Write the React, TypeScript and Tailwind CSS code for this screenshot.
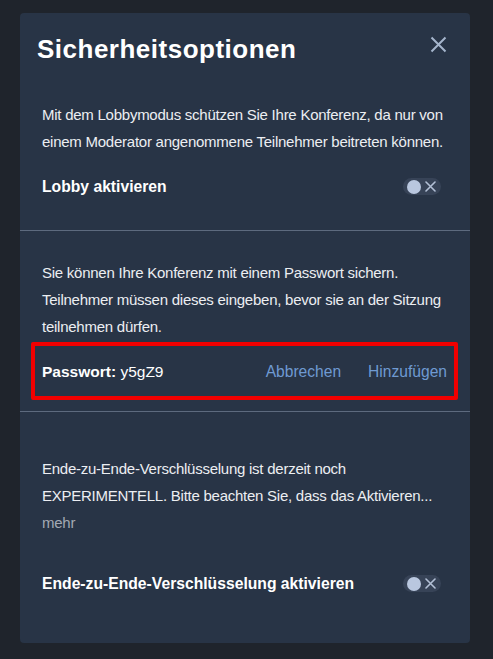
import React from "react";

function Toggle() {
  return (
    <div className="mr-[7px] flex h-[17px] w-[38px] shrink-0 items-center rounded-full bg-[#374357] pl-[4px]">
      <div className="h-[14px] w-[14px] rounded-full bg-[#b9c7df]" />
      <svg className="ml-[4px]" width="11" height="11" viewBox="0 0 11 11">
        <path d="M1 1 L10 10 M10 1 L1 10" stroke="#b3c0d6" strokeWidth="1.6" strokeLinecap="round" />
      </svg>
    </div>
  );
}

export default function App() {
  const font = { fontFamily: '"Liberation Sans", Arial, sans-serif' };
  return (
    <div className="min-h-[659px] w-full bg-[#1f242c] pt-[13px] pb-[16px] pl-[20px] pr-[23px]" style={font}>
      <div className="flex h-[630px] flex-col rounded-[4px] bg-[#283446] text-white">
        {/* Header */}
        <div className="flex items-start justify-between pl-[17px] pr-[23px] pt-[20px]">
          <h1 className="text-[26px] font-bold leading-[32px] tracking-[0.5px] text-white">Sicherheitsoptionen</h1>
          <svg className="mt-[3px]" width="17" height="17" viewBox="0 0 17 17">
            <path d="M1.5 1.5 L15.5 15.5 M15.5 1.5 L1.5 15.5" stroke="#a5b5cc" strokeWidth="2" />
          </svg>
        </div>

        {/* Section 1 */}
        <div className="px-[22px] pt-[36px] pb-[30px]">
          <p className="text-[15px] leading-[27px] tracking-[-0.25px] text-[#eceef2]">
            Mit dem Lobbymodus schützen Sie Ihre Konferenz, da nur von einem Moderator angenommene Teilnehmer beitreten können.
          </p>
          <div className="mt-[18px] flex items-center justify-between">
            <span className="text-[15.7px] font-bold leading-[27px]">Lobby aktivieren</span>
            <Toggle />
          </div>
        </div>
        <div className="h-px bg-[#5d6a7e]" />

        {/* Section 2 */}
        <div className="px-[22px] pt-[28px] pb-[11px]">
          <p className="text-[15px] leading-[27px] tracking-[-0.25px] text-[#eceef2]">
            Sie können Ihre Konferenz mit einem Passwort sichern. Teilnehmer müssen dieses eingeben, bevor sie an der Sitzung teilnehmen dürfen.
          </p>
          <div className="mt-[2px] -ml-[11px] -mr-[10px] flex h-[58px] items-center rounded-[2px] border-4 border-[#f20000] pl-[7px] pr-[7px]">
            <span className="text-[15.5px] leading-[27px]">
              <span className="font-bold">Passwort:</span> y5gZ9
            </span>
            <div className="ml-auto flex gap-[27px] text-[15.6px] leading-[27px] text-[#6f9ad2]">
              <span>Abbrechen</span>
              <span>Hinzufügen</span>
            </div>
          </div>
        </div>
        <div className="h-px bg-[#5d6a7e]" />

        {/* Section 3 */}
        <div className="px-[22px] pt-[43px]">
          <p className="text-[15px] leading-[27px] tracking-[-0.25px] text-[#eceef2]">
            Ende-zu-Ende-Verschlüsselung ist derzeit noch
            <br />
            EXPERIMENTELL. Bitte beachten Sie, dass das Aktivieren...
          </p>
          <p className="text-[15px] leading-[27px] tracking-[-0.25px] text-[#a3a9b3]">mehr</p>
          <div className="mt-[34px] flex items-center justify-between">
            <span className="text-[15.7px] font-bold leading-[27px]">Ende-zu-Ende-Verschlüsselung aktivieren</span>
            <Toggle />
          </div>
        </div>
      </div>
    </div>
  );
}
